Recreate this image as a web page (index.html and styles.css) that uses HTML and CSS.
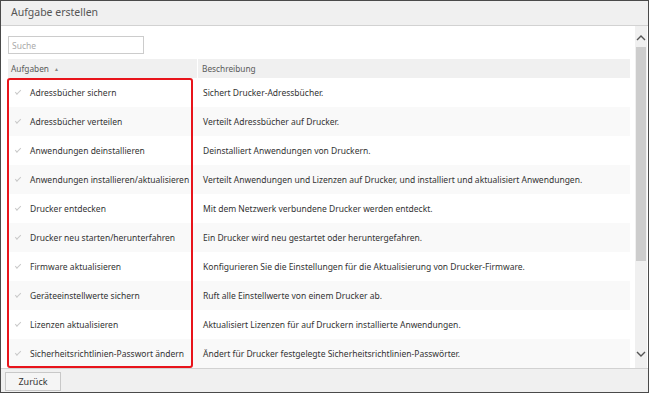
FILE: index.html
```html
<!DOCTYPE html>
<html lang="de">
<head>
    <meta charset="UTF-8">
    <title>Aufgabe erstellen</title>
    <link rel="stylesheet" href="styles.css">
</head>
<body>
    <div class="dialog">
        <div class="titlebar">Aufgabe erstellen</div>

        <div class="main">
            <div class="content">
                <input class="search" type="text" placeholder="Suche">

                <div class="table">
                    <div class="row head">
                        <div class="cell name">Aufgaben <span class="sort">&#9650;</span></div>
                        <div class="cell desc">Beschreibung</div>
                    </div>
                    <div class="row">
                        <div class="cell name"><span class="check"></span>Adressbücher sichern</div>
                        <div class="cell desc">Sichert Drucker-Adressbücher.</div>
                    </div>
                    <div class="row">
                        <div class="cell name"><span class="check"></span>Adressbücher verteilen</div>
                        <div class="cell desc">Verteilt Adressbücher auf Drucker.</div>
                    </div>
                    <div class="row">
                        <div class="cell name"><span class="check"></span>Anwendungen deinstallieren</div>
                        <div class="cell desc">Deinstalliert Anwendungen von Druckern.</div>
                    </div>
                    <div class="row">
                        <div class="cell name"><span class="check"></span>Anwendungen installieren/aktualisieren</div>
                        <div class="cell desc">Verteilt Anwendungen und Lizenzen auf Drucker, und installiert und aktualisiert Anwendungen.</div>
                    </div>
                    <div class="row">
                        <div class="cell name"><span class="check"></span>Drucker entdecken</div>
                        <div class="cell desc">Mit dem Netzwerk verbundene Drucker werden entdeckt.</div>
                    </div>
                    <div class="row">
                        <div class="cell name"><span class="check"></span>Drucker neu starten/herunterfahren</div>
                        <div class="cell desc">Ein Drucker wird neu gestartet oder heruntergefahren.</div>
                    </div>
                    <div class="row">
                        <div class="cell name"><span class="check"></span>Firmware aktualisieren</div>
                        <div class="cell desc">Konfigurieren Sie die Einstellungen für die Aktualisierung von Drucker-Firmware.</div>
                    </div>
                    <div class="row">
                        <div class="cell name"><span class="check"></span>Geräteeinstellwerte sichern</div>
                        <div class="cell desc">Ruft alle Einstellwerte von einem Drucker ab.</div>
                    </div>
                    <div class="row">
                        <div class="cell name"><span class="check"></span>Lizenzen aktualisieren</div>
                        <div class="cell desc">Aktualisiert Lizenzen für auf Druckern installierte Anwendungen.</div>
                    </div>
                    <div class="row">
                        <div class="cell name"><span class="check"></span>Sicherheitsrichtlinien-Passwort ändern</div>
                        <div class="cell desc">Ändert für Drucker festgelegte Sicherheitsrichtlinien-Passwörter.</div>
                    </div>
                </div>

                <div class="highlight"></div>
            </div>

            <div class="scrollbar">
                <svg class="arrow" width="10" height="6" viewBox="0 0 10 6"><path d="M1 5 L5 1 L9 5" fill="none" stroke="#555" stroke-width="1.4"/></svg>
                <div class="track"><div class="thumb"></div></div>
                <svg class="arrow" width="10" height="6" viewBox="0 0 10 6"><path d="M1 1 L5 5 L9 1" fill="none" stroke="#555" stroke-width="1.4"/></svg>
            </div>
        </div>

        <div class="footer">
            <button class="back-btn">Zurück</button>
        </div>
    </div>
</body>
</html>
```

FILE: styles.css
```css
html, body {
    margin: 0;
    padding: 0;
}

body {
    font-family: 'Noto Sans', 'Open Sans', sans-serif;
    color: #333;
    background: #fff;
}

.dialog {
    box-sizing: border-box;
    width: 649px;
    height: 393px;
    border: 1px solid #4a4a4a;
    display: flex;
    flex-direction: column;
    background: #fff;
}

.titlebar {
    flex-shrink: 0;
    height: 24px;
    line-height: 23px;
    padding-left: 10px;
    font-size: 10.5px;
    color: #555;
    background: #f0f0f0;
    border-bottom: 1px solid #d2d2d2;
}

.main {
    flex: 1;
    display: flex;
    min-height: 0;
}

.content {
    position: relative;
    flex: 1;
    padding: 10px 5px 0 7px;
    overflow: hidden;
}

.search {
    display: block;
    box-sizing: border-box;
    width: 136px;
    height: 18px;
    margin: 0 0 5px 0;
    padding: 0 3px;
    border: 1px solid #ccc;
    font-family: inherit;
    font-size: 8.5px;
    color: #333;
    outline: none;
}

.search::placeholder {
    color: #aaa;
}

.table {
    width: 622px;
    font-size: 8.5px;
}

.row {
    display: flex;
    height: 29px;
    align-items: center;
}

.row:nth-child(odd) {
    background: #f9f9f9;
}

.row.head {
    height: 19px;
    background: #f0f0f0;
    color: #5a5a5a;
    font-size: 8.3px;
}

.cell {
    display: flex;
    align-items: center;
    height: 100%;
    white-space: nowrap;
}

.cell.name {
    box-sizing: border-box;
    width: 190px;
    padding-left: 7px;
}

.row.head .cell.name {
    padding-left: 3px;
    border-right: 1px solid #fff;
}

.cell.desc {
    padding-left: 5px;
}

.row.head .cell.desc {
    padding-left: 4px;
}

.sort {
    font-size: 5px;
    color: #888;
    margin-left: 5px;
}

.check {
    width: 5px;
    height: 2px;
    margin-right: 9px;
    margin-top: -3px;
    border-left: 1px solid #c8c8c8;
    border-bottom: 1px solid #c8c8c8;
    transform: rotate(-45deg);
}

.highlight {
    position: absolute;
    left: 6px;
    top: 52px;
    width: 182px;
    height: 286px;
    border: 2px solid #e8141b;
    border-radius: 3px;
    pointer-events: none;
}

.scrollbar {
    width: 12px;
    margin-right: 1px;
    background: #f0f0f0;
    display: flex;
    flex-direction: column;
    align-items: center;
}

.arrow {
    flex-shrink: 0;
    margin: 9px 0 6px;
}

.arrow:last-child {
    margin: 6px 0 11px;
}

.track {
    flex: 1;
    width: 10px;
}

.thumb {
    height: 214px;
    background: #cdcdcd;
}

.footer {
    flex-shrink: 0;
    height: 24px;
    background: #f0f0f0;
    border-top: 1px solid #d2d2d2;
    padding: 3px 0 0 4px;
    box-sizing: border-box;
}

.back-btn {
    display: block;
    height: 19px;
    width: 56px;
    padding: 0;
    font-family: inherit;
    font-size: 9px;
    color: #333;
    background: #f5f5f5;
    border: 1px solid #c8c8c8;
    border-radius: 0;
}
```
